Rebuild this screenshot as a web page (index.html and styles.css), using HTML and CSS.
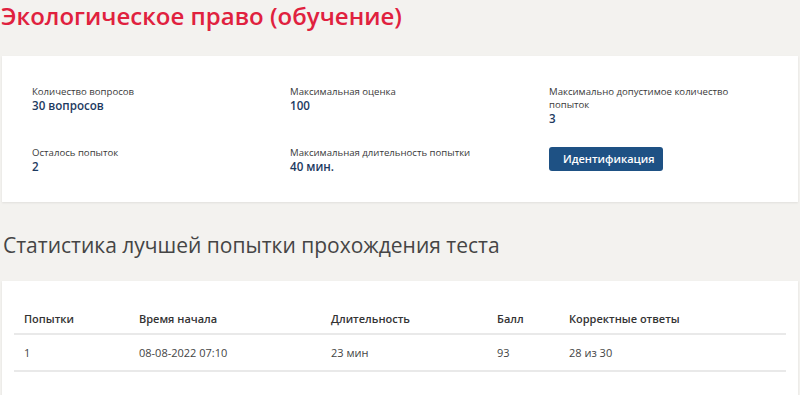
FILE: index.html
```
<!DOCTYPE html>
<html lang="ru">
<head>
    <meta charset="UTF-8">
    <title>Экологическое право (обучение)</title>
    <link rel="stylesheet" href="styles.css">
</head>
<body>

<div class="page-head">
    <h1 class="page-title">Экологическое право (обучение)</h1>
</div>

<div class="card info-card">
    <div class="info-grid">
        <div class="info-item">
            <div class="label">Количество вопросов</div>
            <div class="value">30 вопросов</div>
        </div>
        <div class="info-item">
            <div class="label">Максимальная оценка</div>
            <div class="value">100</div>
        </div>
        <div class="info-item">
            <div class="label">Максимально допустимое количество попыток</div>
            <div class="value">3</div>
        </div>
        <div class="info-item">
            <div class="label">Осталось попыток</div>
            <div class="value">2</div>
        </div>
        <div class="info-item">
            <div class="label">Максимальная длительность попытки</div>
            <div class="value">40 мин.</div>
        </div>
        <div class="info-item">
            <button class="ident-button">Идентификация</button>
        </div>
    </div>
</div>

<h2 class="section-title">Статистика лучшей попытки прохождения теста</h2>

<div class="card stats-card">
    <table class="stats">
        <thead>
            <tr>
                <th class="col-try">Попытки</th>
                <th class="col-start">Время начала</th>
                <th class="col-dur">Длительность</th>
                <th class="col-score">Балл</th>
                <th>Корректные ответы</th>
            </tr>
        </thead>
        <tbody>
            <tr>
                <td>1</td>
                <td>08-08-2022 07:10</td>
                <td>23 мин</td>
                <td>93</td>
                <td>28 из 30</td>
            </tr>
        </tbody>
    </table>
</div>

</body>
</html>
```

FILE: styles.css
```
body {
    font-family: "Open Sans", Arial, sans-serif;
    background: #f3f2ef;
    margin: 0;
    padding: 0;
    color: #333;
}

.page-head {
    height: 56px;
}

.page-title {
    margin: 0;
    padding: 2px 0 0 1px;
    font-size: 24px;
    line-height: 27px;
    font-weight: 600;
    color: #e0213e;
}

.card {
    background: white;
    margin: 0 2px;
    box-shadow: 0 1px 2px rgba(0,0,0,0.08);
}

.info-card {
    padding: 29px 30px 28px;
}

.info-grid {
    display: grid;
    grid-template-columns: 258px 259px 1fr;
    row-gap: 20px;
}

.info-item .label {
    font-size: 9.6px;
    line-height: 13px;
    color: #3a3a3a;
    max-width: 190px;
}

.info-item .value {
    font-size: 11.6px;
    line-height: 15px;
    font-weight: 600;
    color: #1d3a5f;
}

.ident-button {
    background-color: #1e5184;
    color: white;
    border: none;
    border-radius: 3px;
    font-family: "Open Sans", Arial, sans-serif;
    font-size: 11px;
    font-weight: 600;
    padding: 0 14px;
    height: 24px;
    width: 114px;
    cursor: pointer;
}

.section-title {
    margin: 0;
    padding: 29px 0 22px 3px;
    font-size: 21px;
    line-height: 28px;
    font-weight: 400;
    color: #454545;
}

.stats-card {
    padding: 21px 12px 24px;
}

.stats {
    width: 100%;
    border-collapse: collapse;
    font-size: 11px;
}

.stats th {
    text-align: left;
    font-weight: 600;
    color: #333;
    padding: 9px 10px 6px;
    line-height: 16px;
    border-bottom: 2px solid #e9e9e9;
}

.stats td {
    color: #444;
    padding: 10px 10px 9px;
    line-height: 16px;
    border-bottom: 2px solid #e9e9e9;
}

.col-try { width: 95px; }
.col-start { width: 172px; }
.col-dur { width: 146px; }
.col-score { width: 52px; }
```
